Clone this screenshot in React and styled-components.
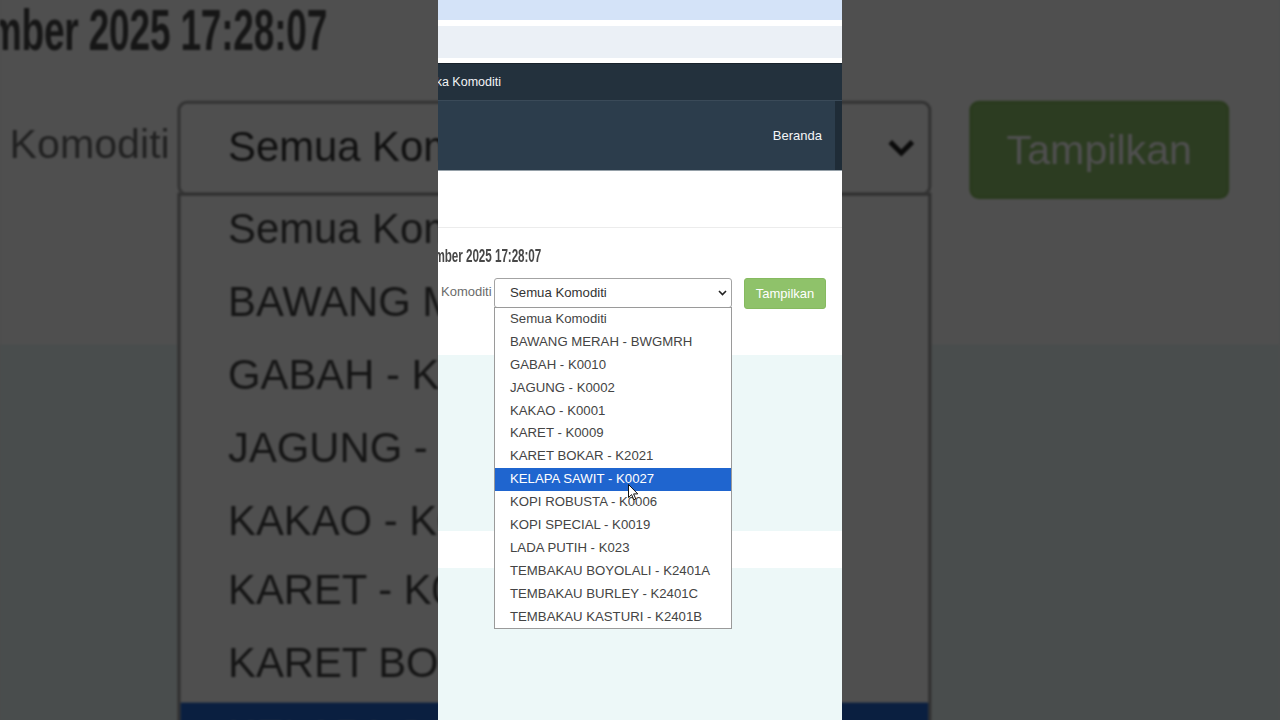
import React from "react";
import styled, { createGlobalStyle } from "styled-components";

const Global = createGlobalStyle`
  html, body { margin: 0; padding: 0; background: #4b4d4d; }
  body { font-family: "Liberation Sans", Arial, sans-serif; }
`;

const ITEMS = [
  "Semua Komoditi",
  "BAWANG MERAH - BWGMRH",
  "GABAH - K0010",
  "JAGUNG - K0002",
  "KAKAO - K0001",
  "KARET - K0009",
  "KARET BOKAR - K2021",
  "KELAPA SAWIT - K0027",
  "KOPI ROBUSTA - K0006",
  "KOPI SPECIAL - K0019",
  "LADA PUTIH - K023",
  "TEMBAKAU BOYOLALI - K2401A",
  "TEMBAKAU BURLEY - K2401C",
  "TEMBAKAU KASTURI - K2401B",
];

const Screen = styled.div`
  position: relative;
  width: 1280px;
  height: 720px;
  overflow: hidden;
  display: flex;
  justify-content: center;
  background: #4b4d4d;
`;

const Backdrop = styled.div`
  position: absolute;
  inset: 0;
  overflow: hidden;
  pointer-events: none;
`;

const Scaled = styled.div`
  width: 404px;
  height: 720px;
  transform-origin: 0 0;
  transform: translateY(-780px) scale(3.168);
  filter: brightness(0.31) blur(0.35px);
`;

const Strip = styled.div`
  position: relative;
  width: 404px;
  height: 720px;
  flex: none;
  overflow: hidden;
  background: #fff;
`;

const Page = styled.div`
  width: 404px;
  height: 720px;
  display: flex;
  flex-direction: column;
  background: #fff;
  overflow: hidden;
`;

const Band = styled.div`
  height: ${(p) => p.$h}px;
  flex: none;
  background: ${(p) => p.$bg || "#fff"};
`;

const NavTop = styled.div`
  height: 36px;
  flex: none;
  background: #23313d;
  border-top: 1px solid #18222b;
  border-bottom: 1px solid #3a4a58;
  display: flex;
  align-items: center;
  color: #f2f4f6;
  font-size: 12.5px;
`;

const LeftCut = styled.div`
  width: ${(p) => p.$w}px;
  flex: none;
  display: flex;
  justify-content: flex-end;
  white-space: nowrap;
`;

const NavMain = styled.div`
  height: 69px;
  flex: none;
  background: #2c3d4c;
  display: flex;
  align-items: center;
  justify-content: flex-end;
  border-bottom: 1px solid #95a0a8;
`;

const NavLink = styled.span`
  color: #f4f6f8;
  font-size: 13px;
  padding-right: 13px;
`;

const NavEdge = styled.div`
  width: 7px;
  align-self: stretch;
  background: #1f2c37;
`;

const HeadSpace = styled.div`
  height: 56px;
  flex: none;
  border-bottom: 1px solid #ececec;
`;

const Content = styled.div`
  height: 127px;
  flex: none;
  padding-top: 18px;
  box-sizing: border-box;
`;

const Title = styled.span`
  display: inline-block;
  font-family: "Liberation Sans Narrow", "Liberation Sans", sans-serif;
  font-weight: 700;
  font-size: 18px;
  line-height: 20px;
  color: #484848;
  transform: scaleX(0.65);
  transform-origin: right center;
  letter-spacing: -0.1px;
`;

const FormRow = styled.div`
  margin-top: 12px;
  display: flex;
  align-items: flex-start;
  height: 31px;
`;

const Label = styled.div`
  width: 52px;
  flex: none;
  box-sizing: border-box;
  padding-left: 3px;
  font-size: 13px;
  line-height: 28px;
  color: #6b6b6b;
`;

const SelectWrap = styled.div`
  position: relative;
  margin-left: 4px;
  width: 238px;
  flex: none;
`;

const SelectBox = styled.div`
  height: 30px;
  box-sizing: border-box;
  border: 1px solid #a3a3a3;
  border-radius: 3px;
  background: #fff;
  display: flex;
  align-items: center;
  justify-content: space-between;
  padding: 0 4px 1px 15px;
  font-size: 13.2px;
  color: #333;
`;

const List = styled.div`
  position: absolute;
  left: 0;
  top: 29px;
  width: 238px;
  box-sizing: border-box;
  border: 1px solid #9a9a9a;
  background: #fff;
  z-index: 5;
`;

const Item = styled.div`
  height: 22.9px;
  line-height: 22.9px;
  padding-left: 15px;
  font-size: 13.2px;
  white-space: nowrap;
  color: ${(p) => (p.$active ? "#fff" : "#444")};
  background: ${(p) => (p.$active ? "#1f65cf" : "transparent")};
`;

const Cursor = styled.svg`
  position: absolute;
  left: 133px;
  top: 176px;
  width: 11px;
  height: 17px;
  z-index: 6;
`;

const Button = styled.div`
  margin-left: 12px;
  width: 82px;
  height: 31px;
  flex: none;
  box-sizing: border-box;
  border: 1px solid #86ba60;
  border-radius: 3px;
  background: #8fc26a;
  color: #fff;
  font-size: 13px;
  display: flex;
  align-items: center;
  justify-content: center;
`;

const Teal = styled.div`
  height: ${(p) => (p.$h ? `${p.$h}px` : "auto")};
  flex: ${(p) => (p.$h ? "none" : "1")};
  background: #edf8f8;
`;

function Chevron() {
  return (
    <svg width="9" height="6" viewBox="0 0 9 6">
      <path d="M1 1l3.5 3.5L8 1" fill="none" stroke="#222" strokeWidth="1.6" />
    </svg>
  );
}

function PageContent({ withCursor }) {
  return (
    <Page>
      <Band $h={20} $bg="#d4e3f8" />
      <Band $h={6} />
      <Band $h={32} $bg="#ebf0f6" />
      <Band $h={5} />
      <NavTop>
        <LeftCut $w={63}>Harga Angka Komoditi</LeftCut>
      </NavTop>
      <NavMain>
        <NavLink>Beranda</NavLink>
        <NavEdge />
      </NavMain>
      <HeadSpace />
      <Content>
        <LeftCut $w={103}>
          <Title>Update Desember 2025 17:28:07</Title>
        </LeftCut>
        <FormRow>
          <Label>Komoditi</Label>
          <SelectWrap>
            <SelectBox>
              <span>Semua Komoditi</span>
              <Chevron />
            </SelectBox>
            <List>
              {ITEMS.map((t, i) => (
                <Item key={t} $active={i === 7}>
                  {t}
                </Item>
              ))}
              {withCursor && (
                <Cursor viewBox="0 0 11 17">
                  <path
                    d="M0.5 0.5 L0.5 13.5 L3.6 10.6 L5.8 15.8 L7.8 15 L5.6 9.9 L9.8 9.9 Z"
                    fill="#fff"
                    stroke="#111"
                    strokeWidth="1"
                    strokeLinejoin="round"
                  />
                </Cursor>
              )}
            </List>
          </SelectWrap>
          <Button>Tampilkan</Button>
        </FormRow>
      </Content>
      <Teal $h={176} />
      <Band $h={37} />
      <Teal />
    </Page>
  );
}

export default function App() {
  return (
    <>
      <Global />
      <Screen>
        <Backdrop>
          <Scaled>
            <PageContent />
          </Scaled>
        </Backdrop>
        <Strip>
          <PageContent withCursor />
        </Strip>
      </Screen>
    </>
  );
}
